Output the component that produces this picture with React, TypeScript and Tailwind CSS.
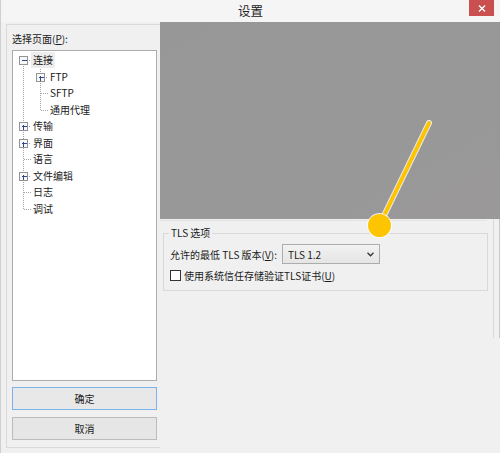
import React from "react";

const FONT = "font-['Microsoft_YaHei','Noto_Sans_CJK_SC',sans-serif]";

type Node = { label: string; level: 0 | 1; box?: "plus" | "minus"; selected?: boolean };

const tree: Node[] = [
	{ label: "连接", level: 0, box: "minus", selected: true },
	{ label: "FTP", level: 1, box: "plus" },
	{ label: "SFTP", level: 1 },
	{ label: "通用代理", level: 1 },
	{ label: "传输", level: 0, box: "plus" },
	{ label: "界面", level: 0, box: "plus" },
	{ label: "语言", level: 0 },
	{ label: "文件编辑", level: 0, box: "plus" },
	{ label: "日志", level: 0 },
	{ label: "调试", level: 0 },
];

const ROW = 16.5;
const TOP = 1;

function TreeLines() {
	const cy = (i: number) => Math.round(TOP + ROW * i + ROW / 2) + 0.5;
	const dot = { stroke: "#a3a3a3", strokeWidth: 1, strokeDasharray: "1 1" };
	return (
		<svg className="absolute inset-0 pointer-events-none" width="143" height="329" shapeRendering="crispEdges">
			{/* level 0 trunk */}
			<line x1="10.5" y1={cy(0) + 5} x2="10.5" y2={cy(9)} {...dot} />
			{/* level 1 trunk */}
			<line x1="27.5" y1={cy(0) + 8} x2="27.5" y2={cy(3)} {...dot} />
			{tree.map((n, i) => {
				const y = cy(i);
				const cx = n.level === 0 ? 10.5 : 27.5;
				const end = n.level === 0 ? 18 : 35;
				const start = n.box ? cx + 5 : cx;
				return (
					<g key={i}>
						<line x1={start} y1={y} x2={end} y2={y} {...dot} />
						{n.box && (
							<g>
								<rect x={cx - 4} y={y - 4} width="8" height="8" fill="#f7f7f7" stroke="#939393" />
								<line x1={cx - 2} y1={y} x2={cx + 3} y2={y} stroke="#2b4a8f" />
								{n.box === "plus" && <line x1={cx} y1={y - 2} x2={cx} y2={y + 3} stroke="#2b4a8f" />}
							</g>
						)}
					</g>
				);
			})}
		</svg>
	);
}

function Annotation() {
	return (
		<svg className="absolute left-0 top-0 pointer-events-none" width="500" height="453">
			<line x1="429" y1="123" x2="380" y2="224" stroke="#ffffff" strokeWidth="6" strokeLinecap="round" opacity="0.8" />
			<line x1="429" y1="123" x2="380" y2="224" stroke="#fcc500" strokeWidth="4" strokeLinecap="round" />
			<circle cx="379.5" cy="225.5" r="12.5" fill="#ffffff" opacity="0.85" />
			<circle cx="379.5" cy="225.5" r="11.5" fill="#fcc500" />
		</svg>
	);
}

export default function App() {
	return (
		<div className={`relative w-[500px] h-[453px] overflow-hidden bg-[#f0f0f0] text-[#1a1a1a] ${FONT}`}>
			{/* title bar */}
			<div className="relative h-[22px] bg-[#f5f5f5] border-l border-[#cfcfcf] flex items-center justify-center">
				<span className="text-[12.5px] text-[#222]">设置</span>
				<div className="absolute right-[6px] top-0 w-[25px] h-[16px] bg-[#c9504f] flex items-center justify-center">
					<svg width="8" height="7" viewBox="0 0 8 7">
						<path d="M1 0.5 L7 6.5 M7 0.5 L1 6.5" stroke="#fff" strokeWidth="1.4" />
					</svg>
				</div>
			</div>

			<div className="flex h-[431px] border-l border-[#cfcfcf]">
				{/* left column */}
				<div className="w-[159px] pl-[5px] pt-[2px]">
					<div className="h-[424px] border-l border-t border-b border-[#dadada] pl-[5px] flex flex-col">
						<div className="h-[25px] flex items-center text-[10px] pt-[1px]">
							选择页面(<span className="underline">P</span>):
						</div>
						<div className="relative w-[145px] h-[331px] bg-white border border-[#acacac]">
							<TreeLines />
							<div className="pt-[1px] text-[10px]">
								{tree.map((n, i) => (
									<div
										key={i}
										className={`h-[16.5px] flex items-center ${n.level === 0 ? "pl-[18px]" : "pl-[35px]"}`}
									>
										<span className={`px-[2px] leading-[16px] ${n.selected ? "bg-[#ededed]" : ""}`}>{n.label}</span>
									</div>
								))}
							</div>
						</div>
						<button className="mt-[6px] w-[145px] h-[23px] border border-[#7cb3ea] bg-[#e8e8e8] text-[10px] flex items-center justify-center">
							确定
						</button>
						<button className="mt-[7px] w-[145px] h-[23px] border border-[#bcbcbc] bg-[#e6e6e6] text-[10px] flex items-center justify-center">
							取消
						</button>
					</div>
				</div>

				{/* right column */}
				<div className="w-[340px] flex flex-col">
					<div className="h-[197px] bg-gradient-to-br from-[#979797] via-[#989898] to-[#9a9898]" />
					<div className="flex">
						<div className="w-[333px]">
							<div className="mt-[1px] w-[327px] border-t border-[#e3e3e3]" />
							<fieldset className="ml-[3px] mt-[6px] w-[325px] h-[64px] border border-[#d9d9d9] px-[6px] pb-[4px]">
								<legend className="text-[10px] px-[2px] -ml-[1px] leading-[12px]">TLS 选项</legend>
								<div className="flex items-center h-[20px] mt-[5px]">
									<span className="text-[10px]">
										允许的最低 TLS 版本(<span className="underline">V</span>):
									</span>
									<div className="ml-[5px] w-[98px] h-[20px] border border-[#acacac] bg-gradient-to-b from-[#f2f2f2] to-[#e5e5e5] flex items-center justify-between px-[5px]">
										<span className="text-[10px]">TLS 1.2</span>
										<svg width="7" height="5" viewBox="0 0 7 5">
											<path d="M0.5 0.8 L3.5 3.8 L6.5 0.8" fill="none" stroke="#333" strokeWidth="1.3" />
										</svg>
									</div>
								</div>
								<div className="flex items-center h-[16px] mt-[3px]">
									<div className="w-[11px] h-[11px] border border-[#333] bg-white" />
									<span className="ml-[3px] text-[10px]">
										使用系统信任存储验证TLS证书(<span className="underline">U</span>)
									</span>
								</div>
							</fieldset>
						</div>
						<div className="flex gap-[5px]">
							<div className="w-px h-[119px] bg-[#d9d9d9]" />
							<div className="w-px h-[119px] bg-[#c9c9c9]" />
						</div>
					</div>
				</div>
			</div>

			<Annotation />
		</div>
	);
}
